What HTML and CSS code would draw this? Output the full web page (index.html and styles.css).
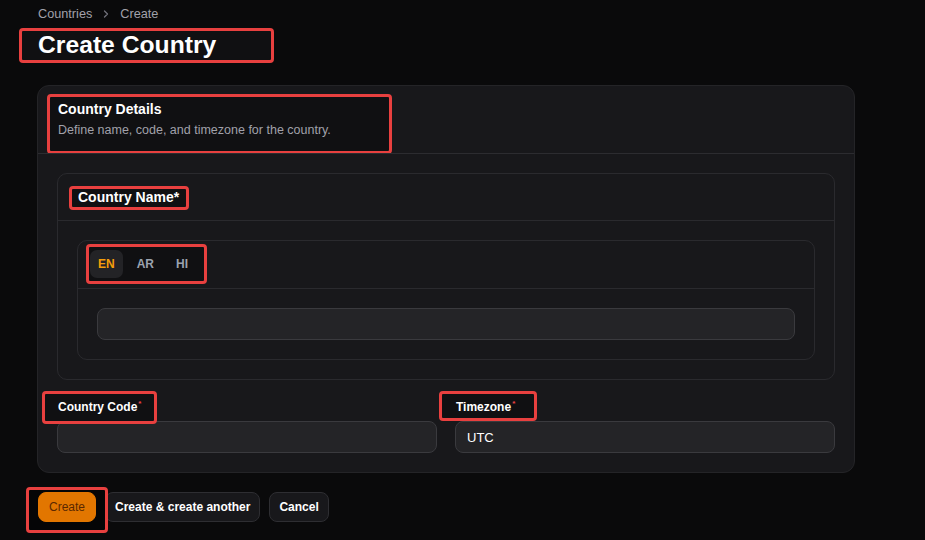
FILE: index.html
```html
<!DOCTYPE html>
<html lang="en">
<head>
    <meta charset="UTF-8">
    <meta name="viewport" content="width=device-width, initial-scale=1.0">
    <title>Create Country</title>
    <link rel="stylesheet" href="styles.css">
</head>
<body>

    <div class="page">
        <!-- Breadcrumb + heading -->
        <nav class="breadcrumb">
            <span>Countries</span>
            <svg class="chevron" width="10" height="10" viewBox="0 0 10 10"><path d="M3.5 2l3 3-3 3" fill="none" stroke="currentColor" stroke-width="1.3" stroke-linecap="round" stroke-linejoin="round"/></svg>
            <span>Create</span>
        </nav>
        <h1 class="title above">Create Country</h1>

        <!-- Form card -->
        <section class="card">
            <header class="card-header above">
                <h2>Country Details</h2>
                <p>Define name, code, and timezone for the country.</p>
            </header>

            <div class="card-body">
                <div class="box">
                    <div class="box-header">
                        <h3 class="above">Country Name*</h3>
                    </div>
                    <div class="box-body">
                        <div class="tabs">
                            <div class="tab-bar">
                                <button class="tab active above">EN</button>
                                <button class="tab above">AR</button>
                                <button class="tab above">HI</button>
                            </div>
                            <div class="tab-panel">
                                <input type="text" class="input">
                            </div>
                        </div>
                    </div>
                </div>

                <div class="fields">
                    <div class="field">
                        <label class="above">Country Code<sup>*</sup></label>
                        <input type="text" class="input">
                    </div>
                    <div class="field">
                        <label class="above">Timezone<sup>*</sup></label>
                        <input type="text" class="input" value="UTC">
                    </div>
                </div>
            </div>
        </section>

        <div class="actions">
            <button class="btn primary above">Create</button>
            <button class="btn">Create &amp; create another</button>
            <button class="btn">Cancel</button>
        </div>
    </div>

    <!-- Review marks -->
    <div class="mark mark-title"></div>
    <div class="mark mark-details"></div>
    <div class="mark mark-name"></div>
    <div class="mark mark-tabs"></div>
    <div class="mark mark-code"></div>
    <div class="mark mark-zone"></div>
    <div class="mark mark-create"></div>

</body>
</html>
```

FILE: styles.css
```css
body {
    margin: 0;
    background-color: #0a0a0b;
    color: #ffffff;
    font-family: "Liberation Sans", Arial, sans-serif;
}

.page {
    width: 818px;
    padding: 6px 0 0 37px;
}

.above {
    position: relative;
    z-index: 1;
}

.breadcrumb {
    display: flex;
    align-items: center;
    gap: 9px;
    padding-left: 1px;
    font-size: 12.7px;
    line-height: 16px;
    color: #a1a1aa;
}

.chevron {
    color: #71717a;
}

.title {
    margin: 8px 0 0 1px;
    font-size: 24.7px;
    line-height: 30px;
    font-weight: bold;
}

.card {
    margin-top: 25px;
    background-color: #18181b;
    border: 1px solid #242427;
    border-radius: 12px;
}

.card-header {
    padding: 13px 20px 15px;
    border-bottom: 1px solid #2c2c30;
}

.card-header h2 {
    margin: 0;
    font-size: 14px;
    line-height: 20px;
}

.card-header p {
    margin: 3px 0 0;
    font-size: 12.5px;
    line-height: 16px;
    color: #a1a1aa;
}

.card-body {
    padding: 19px;
}

.box {
    border: 1px solid #2a2a2e;
    border-radius: 10px;
}

.box-header {
    padding: 13px 20px;
    border-bottom: 1px solid #2a2a2e;
}

.box-header h3 {
    display: inline-block;
    margin: 0;
    font-size: 14px;
    line-height: 20px;
}

.box-body {
    padding: 19px;
}

.tabs {
    border: 1px solid #2a2a2e;
    border-radius: 10px;
}

.tab-bar {
    display: flex;
    gap: 6px;
    padding: 9px 12px 10px;
    border-bottom: 1px solid #2a2a2e;
}

.tab {
    padding: 0 8px;
    height: 28px;
    background: none;
    border: none;
    border-radius: 7px;
    font-family: inherit;
    font-size: 12px;
    font-weight: bold;
    color: #9ca3af;
}

.tab.active {
    background-color: #232326;
    color: #f59e0b;
}

.tab-panel {
    padding: 19px;
}

.input {
    display: block;
    box-sizing: border-box;
    width: 100%;
    height: 32px;
    padding: 0 11px;
    background-color: #242427;
    border: 1px solid #3a3a3e;
    border-radius: 8px;
    font-family: inherit;
    font-size: 13px;
    color: #ffffff;
}

.fields {
    display: grid;
    grid-template-columns: 1fr 1fr;
    gap: 18px;
    margin-top: 19px;
}

.field label {
    display: block;
    margin: 0 0 6px 1px;
    font-size: 12px;
    line-height: 16px;
    font-weight: bold;
}

.field label sup {
    margin-left: 1px;
    font-size: 8px;
    line-height: 0;
    color: #ef4444;
}

.actions {
    display: flex;
    gap: 9px;
    margin: 19px 0 0 1px;
}

.btn {
    height: 30px;
    padding: 0 9px;
    background-color: #18181b;
    border: 1px solid #2e2e32;
    border-radius: 8px;
    font-family: inherit;
    font-size: 12px;
    font-weight: bold;
    color: #ffffff;
}

.btn.primary {
    padding: 0 10px;
    background-color: #e27600;
    border-color: #e27600;
    font-weight: normal;
    color: #5a2800;
}

/* red review boxes drawn over the screen */
.mark {
    position: absolute;
    box-sizing: border-box;
    border: 3px solid #e8403f;
    border-radius: 4px;
    background-color: #101012;
}

.mark-title { left: 19px; top: 28px; width: 255px; height: 35px; }
.mark-details { left: 47px; top: 94px; width: 345px; height: 60px; }
.mark-name { left: 69px; top: 186px; width: 120px; height: 24px; }
.mark-tabs { left: 86px; top: 244px; width: 121px; height: 40px; }
.mark-code { left: 42px; top: 391px; width: 115px; height: 33px; }
.mark-zone { left: 439px; top: 391px; width: 98px; height: 30px; }
.mark-create { left: 26px; top: 487px; width: 82px; height: 46px; background-color: #050506; }
```
